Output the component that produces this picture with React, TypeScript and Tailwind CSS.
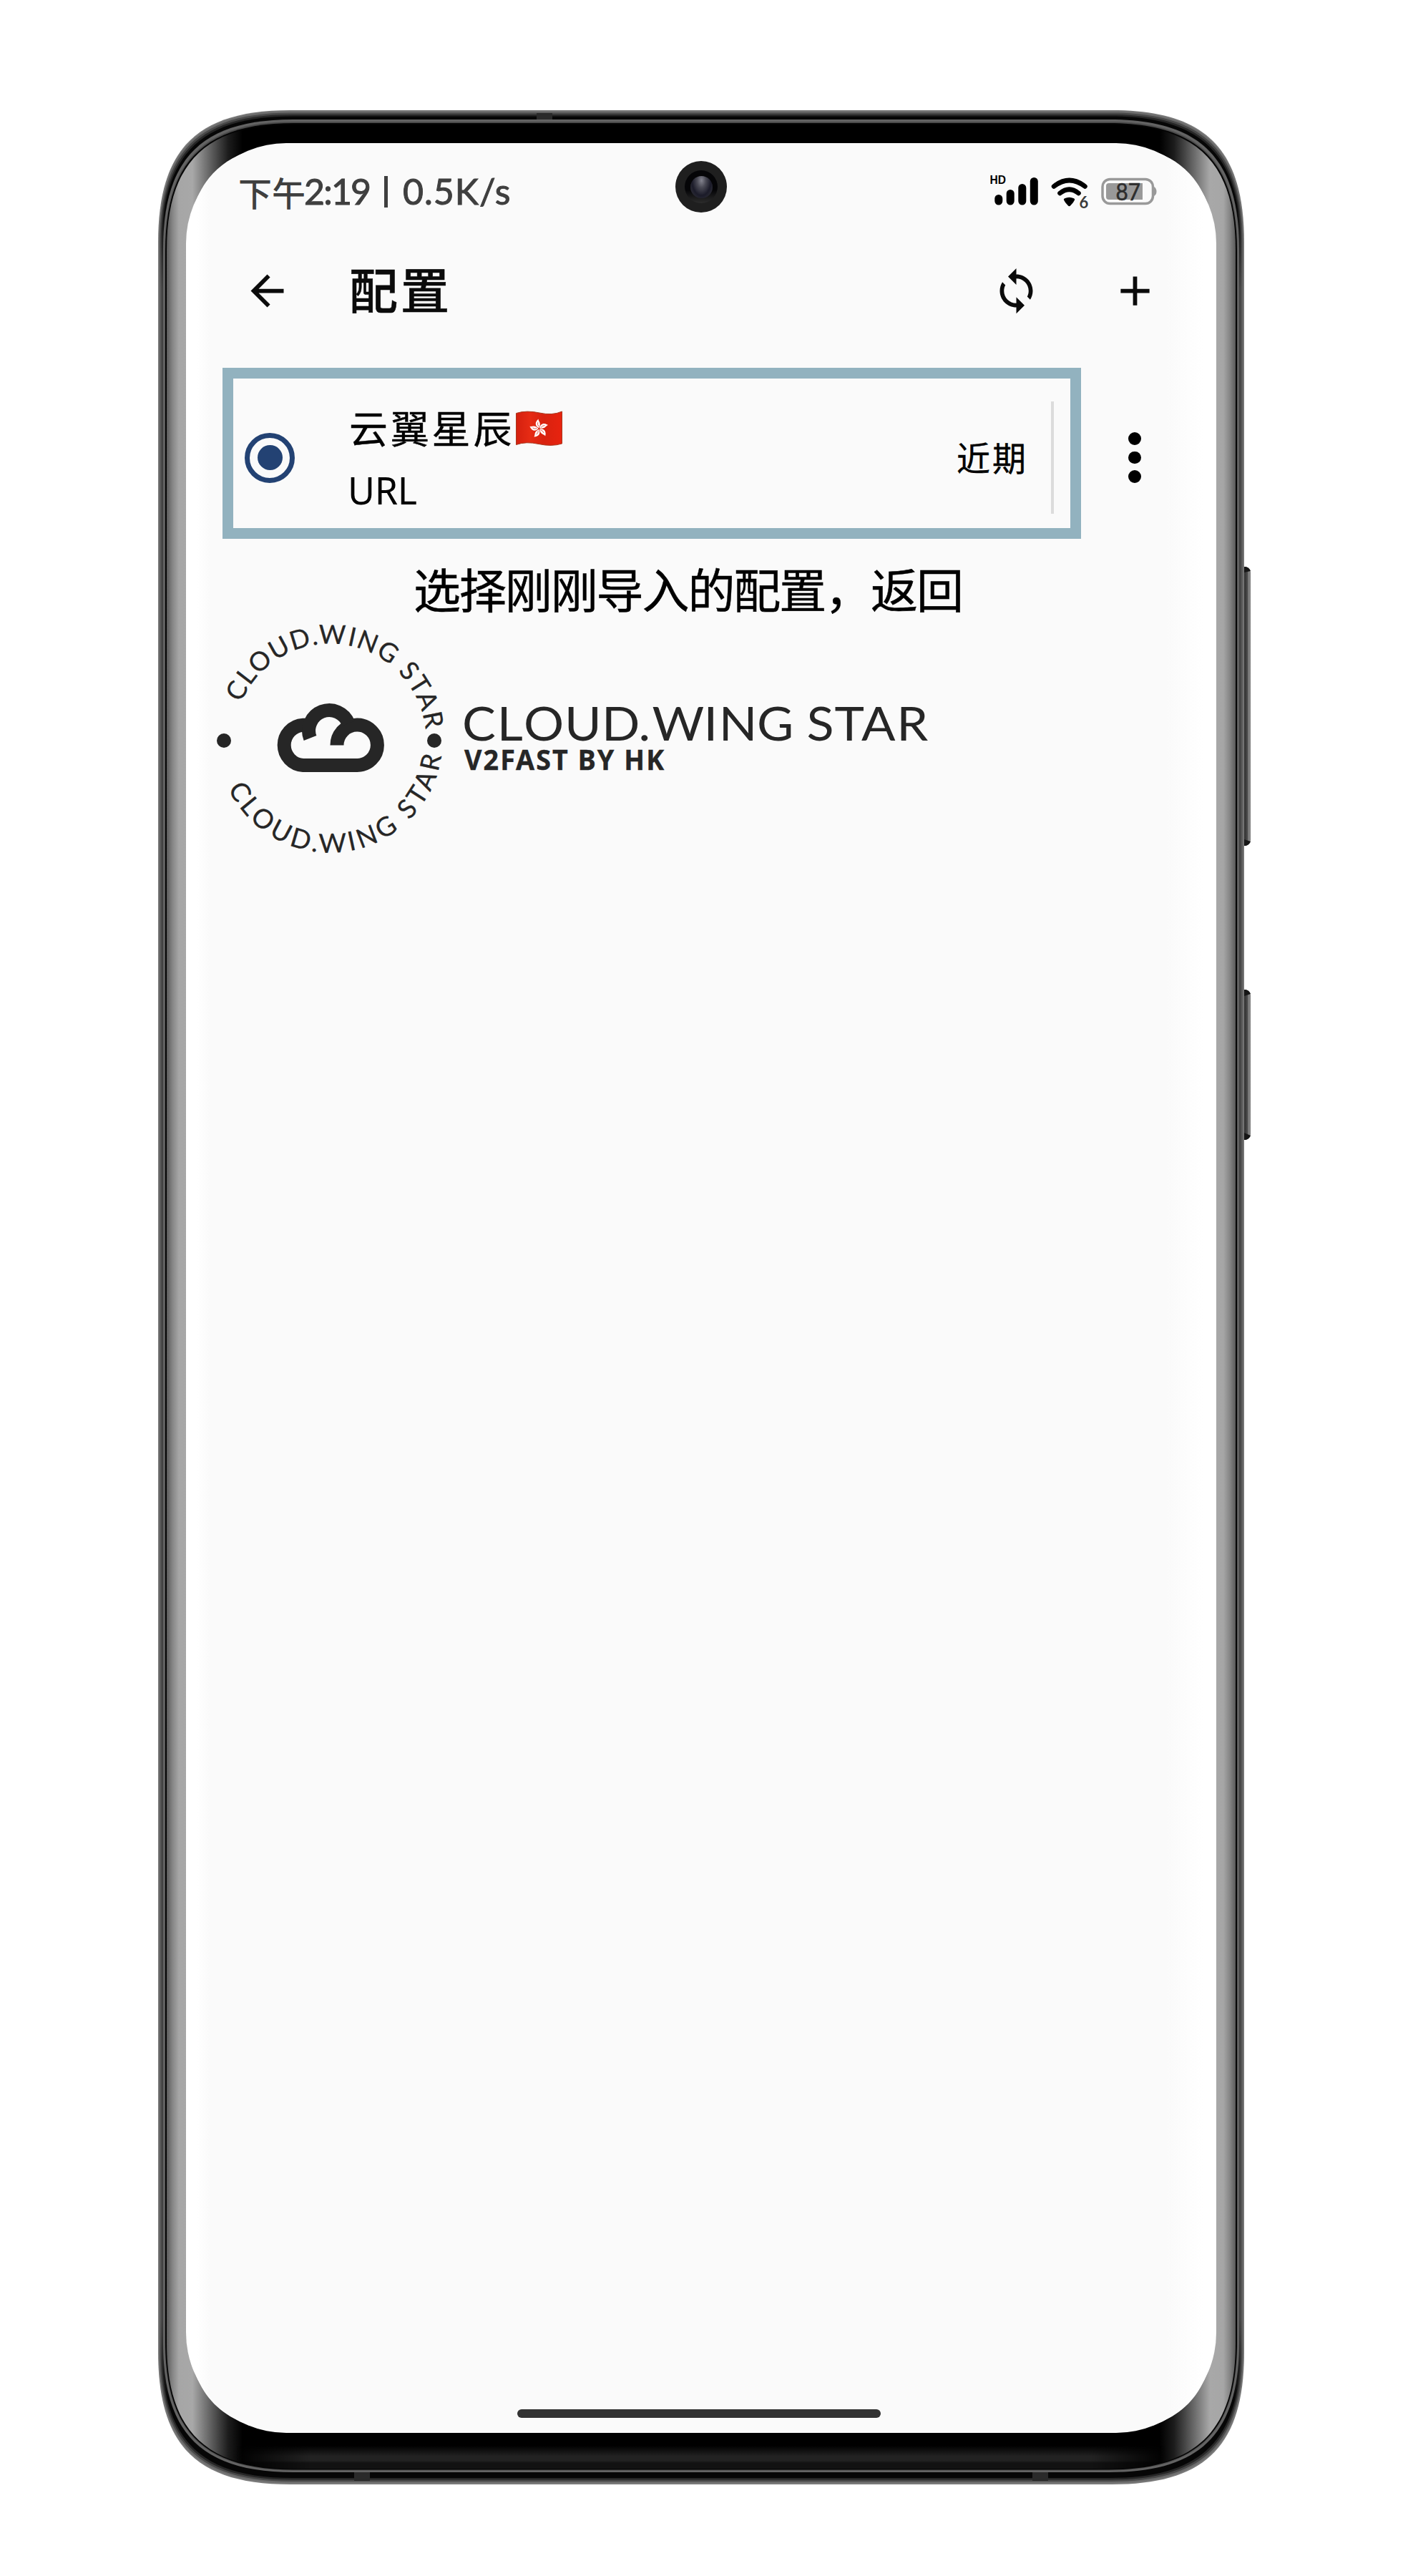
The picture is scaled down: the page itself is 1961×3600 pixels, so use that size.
import React from "react";

/** Rounded body outline with continuous-curvature corners. */
function body(l: number, t: number, r: number, b: number, L: number, k: number) {
  return (
    `M${l} ${t + L}C${l} ${t + k} ${l + k} ${t} ${l + L} ${t}` +
    `H${r - L}C${r - k} ${t} ${r} ${t + k} ${r} ${t + L}` +
    `V${b - L}C${r} ${b - k} ${r - k} ${b} ${r - L} ${b}` +
    `H${l + L}C${l + k} ${b} ${l} ${b - k} ${l} ${b - L}Z`
  );
}

const W = 1527;
const H = 3318;

/** Metal rim, drawn from the outside in: [side, top, bottom inset, colour] */
const RIM: [number, number, number, string][] = [
  [0, 0, 0, "#7a7a7a"],
  [1, 1.5, 2, "#6c6c6c"],
  [2, 3.5, 4, "url(#rimA)"],
  [3.5, 6, 6.5, "url(#rimB)"],
  [5, 8.5, 9, "url(#rimC)"],
  [7, 13, 17, "#636363"],
  [9.5, 16, 19.5, "#4c4c4c"],
  [10, 18, 20.5, "#050505"],
];

function RimGradient({ id, edge, side }: { id: string; edge: string; side: string }) {
  return (
    <linearGradient id={id} gradientUnits="userSpaceOnUse" x1="0" y1="0" x2="0" y2={H}>
      <stop offset="0" stopColor={edge} />
      <stop offset="0.04" stopColor={edge} />
      <stop offset="0.075" stopColor={side} />
      <stop offset="0.93" stopColor={side} />
      <stop offset="0.965" stopColor={edge} />
      <stop offset="1" stopColor={edge} />
    </linearGradient>
  );
}

function PhoneFrame() {
  return (
    <svg className="absolute inset-0" width={W} height={H} viewBox={`0 0 ${W} ${H}`}>
      <defs>
        <RimGradient id="rimA" edge="#484848" side="#606060" />
        <RimGradient id="rimB" edge="#262626" side="#4e4e4e" />
        <RimGradient id="rimC" edge="#060606" side="#424242" />
        <linearGradient id="glass" gradientUnits="userSpaceOnUse" x1="0" y1="0" x2="1518" y2="0">
          <stop offset={12 / 1518} stopColor="#5a5a5a" />
          <stop offset={20 / 1518} stopColor="#858585" />
          <stop offset={29 / 1518} stopColor="#a6a6a6" />
          <stop offset={48 / 1518} stopColor="#a8a8a8" />
          <stop offset={70 / 1518} stopColor="#6a6a6a" />
          <stop offset={98 / 1518} stopColor="#1c1c1c" />
          <stop offset={118 / 1518} stopColor="#000" />
          <stop offset={1400 / 1518} stopColor="#000" />
          <stop offset={1420 / 1518} stopColor="#1c1c1c" />
          <stop offset={1448 / 1518} stopColor="#6a6a6a" />
          <stop offset={1470 / 1518} stopColor="#a8a8a8" />
          <stop offset={1489 / 1518} stopColor="#a6a6a6" />
          <stop offset={1498 / 1518} stopColor="#858585" />
          <stop offset={1506 / 1518} stopColor="#5a5a5a" />
        </linearGradient>
        <linearGradient id="chin" x1="0" y1="0" x2="0" y2="1">
          <stop offset="0" stopColor="#000" />
          <stop offset="0.45" stopColor="#222" />
          <stop offset="0.65" stopColor="#222" />
          <stop offset="0.75" stopColor="#121212" />
          <stop offset="1" stopColor="#121212" />
        </linearGradient>
        <linearGradient id="chinFade" x1="0" y1="0" x2="1" y2="0">
          <stop offset="0" stopColor="#000" />
          <stop offset="0.08" stopColor="#fff" />
          <stop offset="0.92" stopColor="#fff" />
          <stop offset="1" stopColor="#000" />
        </linearGradient>
        <mask id="chinMask">
          <rect x="110" y="3260" width="1298" height="40" fill="url(#chinFade)" />
        </mask>
        <linearGradient id="key" x1="0" y1="0" x2="1" y2="0">
          <stop offset="0" stopColor="#333" />
          <stop offset="0.35" stopColor="#3c3c3c" />
          <stop offset="0.6" stopColor="#555" />
          <stop offset="0.75" stopColor="#888" />
          <stop offset="1" stopColor="#777" />
        </linearGradient>
        <clipPath id="glassClip">
          <path d={body(12, 20, 1506, 3296, 176, 54)} />
        </clipPath>
      </defs>
      <path d="M1517 638h3q7 2 7 8v374q0 6-7 8h-3z" fill="url(#key)" />
      <path d="M1517 1229h3q7 2 7 8v194q0 6-7 8h-3z" fill="url(#key)" />
      <path d="M1518 638h2q5 1 7 6l-9 2zM1518 1028h2q5-1 7-6l-9-3zM1518 1229h2q5 1 7 6l-9 3zM1518 1439h2q5-1 7-6l-9-4z" fill="#161616" />
      {RIM.map(([s, t, b, fill], i) => (
        <path key={i} d={body(s, t, 1518 - s, 3318 - b, 185 - s * 0.5, 54)} fill={fill} />
      ))}
      <path d="M529 4h22v9h-22zM274 3301h22v12h-22zM1222 3301h22v12h-22z" fill="#2a2a2a" />
      <g clipPath="url(#glassClip)">
        <rect width="1518" height={H} fill="url(#glass)" />
        <rect x="110" y="3264" width="1298" height="32" fill="url(#chin)" mask="url(#chinMask)" />
      </g>
      <path d={body(39, 46, 1479, 3246, 170, 50)} fill="#fff" />
    </svg>
  );
}

function StatusIcons() {
  return (
    <svg width="236" height="56" viewBox="1384 240 236 56" fontFamily="Lato, sans-serif">
      <text x="1383.5" y="257.3" fontSize="16.5" fontWeight="700" fontFamily="'Liberation Sans', sans-serif" textLength="22.5" lengthAdjust="spacingAndGlyphs">HD</text>
      <g>
        <rect x="1390.3" y="272" width="11" height="14.5" rx="5.5" />
        <rect x="1406.7" y="265" width="11" height="21.5" rx="5.5" />
        <rect x="1423.3" y="257" width="11" height="29.5" rx="5.5" />
        <rect x="1439.8" y="248" width="11" height="38.5" rx="5.5" />
      </g>
      <g fill="none" stroke="#000" strokeWidth="6.6" strokeLinecap="round">
        <path d="M1473 260.5Q1494.5 243.5 1516.5 260.5" />
        <path d="M1481.5 270Q1494.5 259.5 1507.5 270" />
      </g>
      <path d="M1487 279.500q-.7-1.500 1-2.300q6.500-3 13 0q1.700.8 1 2.300q-1.500 3.800-6 8q-1.500 1.300-3 0q-4.500-4.200-6-8z" />
      <text x="1508.5" y="291" fontSize="22" fontWeight="700" fill="#3a3a3a">6</text>
      <rect x="1541" y="250.5" width="70.5" height="34" rx="10.5" fill="none" stroke="#999" strokeWidth="3.5" />
      <path d="M1613 261q3.500 2 3.500 6.500t-3.500 6.500z" fill="#999" />
      <path d="M1550 256h47v23h-47q-4 0-4-4v-15q0-4 4-4z" fill="#999" />
      <text x="1559.5" y="279.5" fontSize="33" fill="#2e2e2e" stroke="#2e2e2e" strokeWidth=".6" textLength="34.5" lengthAdjust="spacingAndGlyphs">87</text>
    </svg>
  );
}

function Icon({ d }: { d: string }) {
  return (
    <svg width="69" height="69" viewBox="0 0 24 24" fill="#0b0b0b">
      <path d={d} />
    </svg>
  );
}

function Flag() {
  return (
    <svg className="mt-[5px] ml-[2px]" width="65" height="50" viewBox="0 0 65 50">
      <defs>
        <linearGradient id="flag" x1="0" y1="0" x2="1" y2="0">
          <stop offset="0" stopColor="#d4200f" />
          <stop offset="0.3" stopColor="#e62b14" />
          <stop offset="0.6" stopColor="#d8220f" />
          <stop offset="1" stopColor="#e8230f" />
        </linearGradient>
      </defs>
      <path d="M.5 3.500Q15-1 33 3T64.500 1V46Q50 50.500 32 46.500T.5 47.500Z" fill="url(#flag)" stroke="#a8381f" strokeWidth="1" />
      {[0, 72, 144, 216, 288].map((a) => (
        <g key={a} transform={`rotate(${a - 8} 32.500 25)`}>
          <path d="M32.500 24C27 21 27.500 15 33.500 11.500C32.500 15 37.500 17 32.500 24Z" fill="#fff" />
          <path d="M32.300 22Q30.500 19 32 16" stroke="#e0281a" strokeWidth=".7" fill="none" />
        </g>
      ))}
    </svg>
  );
}

function Logo() {
  return (
    <svg className="overflow-visible" width="1010" height="340" viewBox="300 866 1010 340" fill="#262626" fontFamily="Lato, sans-serif">
      <path id="arcTop" d="M337 982A134.500 134.500 0 0 1 595.5 1034" fill="none" />
      <path id="arcBottom" d="M318.8 1101.8A157.5 157.5 0 0 0 618.3 1042.2" fill="none" />
      <text fontSize="36.5" stroke="#262626" strokeWidth=".3">
        <textPath href="#arcTop" textLength="354" lengthAdjust="spacing">CLOUD.WING STAR</textPath>
      </text>
      <text fontSize="37" stroke="#262626" strokeWidth=".3">
        <textPath href="#arcBottom" textLength="402" lengthAdjust="spacing">CLOUD.WING STAR</textPath>
      </text>
      <circle cx="313" cy="1035" r="10" />
      <circle cx="607" cy="1035" r="10" />
      <g fill="none" stroke="#262626" strokeWidth="19">
        <path d="M471 1041.500A28.200 28.200 0 1 1 499 1069.500H423.700A28.200 28.200 0 0 1 423.700 1013.200H434" />
        <path d="M433.500 1031.500A28 28 0 1 1 487 1011" />
      </g>
      <g transform="translate(0 1034.5) scale(1.08 1)">
        <text
          fontSize="65"
          y="0"
          x="598.1 643.2 677.8 730.6 778.7 826.4 844 910.6 930.3 979.6 1023 1044 1080.2 1114.8 1160.4"
        >
          CLOUD.WING STAR
        </text>
      </g>
      <g transform="translate(649 1075.5) scale(.94 1)">
        <text fontSize="40" fontWeight="700" fontFamily="'Noto Sans', sans-serif" stroke="#262626" strokeWidth=".4" textLength="297">V2FAST BY HK</text>
      </g>
    </svg>
  );
}

export default function App() {
  return (
    <main className="flex h-[3600px] w-[1961px] bg-white pt-[154px] pl-[221px] font-['Noto_Sans','Noto_Sans_CJK_SC',sans-serif] text-black">
      <div className="relative h-[3318px] w-[1527px] pt-[46px] pl-[39px]">
        <PhoneFrame />
        <section className="relative flex h-[3200px] w-[1440px] flex-col rounded-[140px] bg-[linear-gradient(to_right,#fff_0,#fff_16px,#fafafa_34px,#fafafa_1370px,#fff_1422px,#fff_1440px)]">
          {/* Status bar */}
          <header className="flex h-[136px] items-center justify-between pr-[80px] pl-[73px]">
            <div className="flex h-[60px] items-center leading-[60px] text-[#3f3f3f]">
              <span className="w-[92px] font-['Noto_Sans_CJK_SC',sans-serif] text-[47px] font-medium whitespace-nowrap">下午</span>
              <span className="w-[112px] pb-[2px] font-['Lato',sans-serif] text-[50px] tracking-[-1.8px] whitespace-nowrap [-webkit-text-stroke:1px_#3f3f3f]">2:19</span>
              <div className="h-[44px] w-[5px] bg-[#3f3f3f]" />
              <span className="pb-[2px] pl-[21px] font-['Lato',sans-serif] text-[50px] tracking-[1px] whitespace-nowrap [-webkit-text-stroke:1px_#3f3f3f]">0.5K/s</span>
            </div>
            <StatusIcons />
          </header>
          <div className="absolute top-[25px] left-[684px] flex size-[72px] items-center justify-center rounded-full bg-[#1f1f1f]">
            <div className="flex size-[46px] items-center justify-center rounded-full bg-[linear-gradient(#050507_60%,#2c2c2c)]">
              <div className="size-[31px] rounded-full bg-[radial-gradient(ellipse_at_50%_20%,#84848f_0,#4a4a55_28%,#1b1b29_60%,#3a3a40_100%)]" />
            </div>
          </div>

          {/* App bar */}
          <nav className="mt-[20px] flex h-[100px] items-center pr-[79px] pl-[79px]">
            <Icon d="M20 11H7.830l5.590-5.590L12 4l-8 8 8 8 1.410-1.410L7.830 13H20v-2z" />
            <h1 className="ml-[80px] flex-1 pb-[6px] text-[68px] leading-[94px] font-medium tracking-[4px] text-[#0b0b0b] font-['Noto_Sans_CJK_SC',sans-serif] [-webkit-text-stroke:0.6px_#0b0b0b]">配置</h1>
            <Icon d="M12 4V1L8 5l4 4V6c3.310 0 6 2.690 6 6 0 1.010-.250 1.970-.700 2.800l1.460 1.460C19.540 15.030 20 13.570 20 12c0-4.420-3.580-8-8-8zm0 14c-3.310 0-6-2.690-6-6 0-1.010.250-1.970.700-2.800L5.240 7.740C4.460 8.970 4 10.430 4 12c0 4.420 3.580 8 8 8v3l4-4-4-4v3z" />
            <div className="w-[97px]" />
            <Icon d="M19 13h-6v6h-2v-6H5v-2h6V5h2v6h6v2z" />
          </nav>

          {/* Profile row */}
          <div className="mt-[58px] flex h-[239px] items-center pl-[51px]">
            <div className="flex h-[239px] w-[1200px] items-center border-[15px] border-[#92b2bf] pl-[16px]">
              <div className="mt-[12px] flex size-[70px] items-center justify-center rounded-full border-[7px] border-[#234273]">
                <div className="size-[35px] rounded-full bg-[#234273]" />
              </div>
              <div className="ml-[76px] flex flex-1 flex-col pt-[14px]">
                <div className="flex h-[80px] items-center">
                  <span className="font-['Noto_Sans_CJK_SC',sans-serif] text-[54px] leading-[80px] tracking-[3.8px] [-webkit-text-stroke:0.4px_#000]">云翼星辰</span>
                  <Flag />
                </div>
                <span className="ml-[-2px] pt-[7px] text-[52px] leading-[81px] tracking-[-0.3px]">URL</span>
              </div>
              <span className="pt-[9px] font-['Noto_Sans_CJK_SC',sans-serif] text-[47px] leading-[60px] tracking-[3px] [-webkit-text-stroke:0.4px_#000]">近期</span>
              <div className="mt-[12px] mr-[23px] ml-[32px] h-[157px] w-[4px] bg-[#dcdcdc]" />
            </div>
            <div className="mt-[12px] ml-[66px] flex flex-col gap-[8.7px]">
              <i className="size-[17.6px] rounded-full bg-black" />
              <i className="size-[17.6px] rounded-full bg-black" />
              <i className="size-[17.6px] rounded-full bg-black" />
            </div>
          </div>

          <p className="mt-[24px] pl-[318px] font-['Noto_Sans_CJK_SC',sans-serif] text-[66px] leading-[88px] tracking-[-2.1px] whitespace-nowrap [-webkit-text-stroke:0.5px_#000]">选择刚刚导入的配置，返回</p>

          <div className="mt-px pl-[40px]">
            <Logo />
          </div>

          <div className="mt-auto mb-[21px] ml-[463px] h-[12px] w-[508px] rounded-full bg-[#323232]" />
        </section>
      </div>
    </main>
  );
}
